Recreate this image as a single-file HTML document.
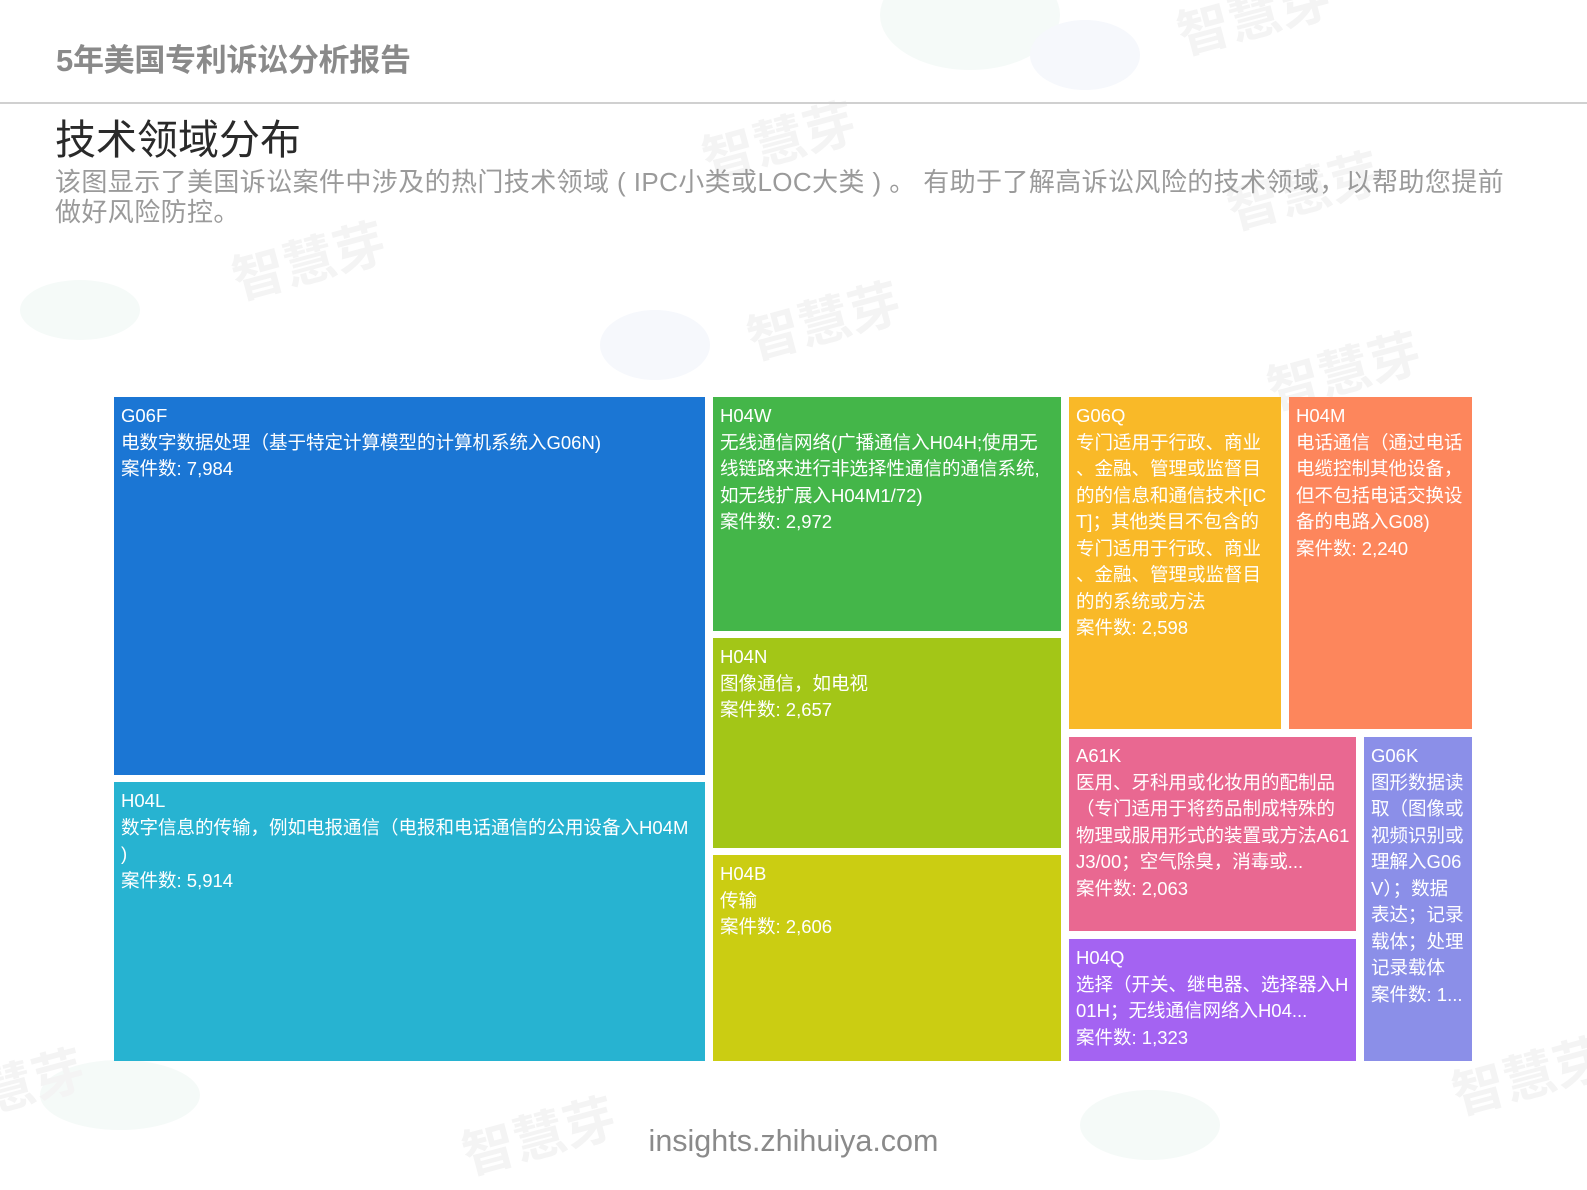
<!DOCTYPE html>
<html><head><meta charset="utf-8"><style>
*{margin:0;padding:0;box-sizing:border-box}
body{width:1587px;height:1190px;background:#fff;position:relative;overflow:hidden;font-family:"Liberation Sans","Noto Sans CJK SC",sans-serif}
.wm{position:absolute;color:#f4f4f4;font-size:52px;font-weight:bold;transform:rotate(-15deg);white-space:nowrap}
.blob{position:absolute;border-radius:50%;background:#f5faf8}
.h1{position:absolute;left:56px;top:35px;font-size:31px;font-weight:bold;color:#8a8a8a;letter-spacing:-0.3px}
.line{position:absolute;left:0;top:102px;width:1587px;height:2px;background:#d0d0d0}
.t{position:absolute;left:55px;top:106px;font-size:41px;color:#2a2a2a}
.d{position:absolute;left:55px;top:167px;width:1530px;font-size:26px;line-height:30px;color:#9a9a9a;letter-spacing:0.4px}
.b{position:absolute;color:#fff;font-size:18.5px;line-height:26.5px;padding:6px 7px;overflow:hidden;white-space:nowrap}
.f{position:absolute;left:0;width:1587px;text-align:center;top:1124px;font-size:30.5px;color:#8a8a8a}
</style></head><body>
<div class="blob" style="left:880px;top:-40px;width:180px;height:110px"></div>
<div class="blob" style="left:1030px;top:20px;width:110px;height:70px;background:#f6f8fc"></div>
<div class="blob" style="left:20px;top:280px;width:120px;height:60px"></div>
<div class="blob" style="left:600px;top:310px;width:110px;height:70px;background:#f6f8fc"></div>
<div class="blob" style="left:40px;top:1060px;width:160px;height:70px"></div>
<div class="blob" style="left:1080px;top:1090px;width:140px;height:70px"></div>
<div class="wm" style="left:700px;top:100px">智慧芽</div>
<div class="wm" style="left:230px;top:220px">智慧芽</div>
<div class="wm" style="left:745px;top:280px">智慧芽</div>
<div class="wm" style="left:1265px;top:330px">智慧芽</div>
<div class="wm" style="left:1225px;top:150px">智慧芽</div>
<div class="wm" style="left:1175px;top:-25px">智慧芽</div>
<div class="wm" style="left:460px;top:1095px">智慧芽</div>
<div class="wm" style="left:1450px;top:1035px">智慧芽</div>
<div class="wm" style="left:-20px;top:1040px">慧芽</div>
<div class="h1">5年美国专利诉讼分析报告</div>
<div class="line"></div>
<div class="t">技术领域分布</div>
<div class="d">该图显示了美国诉讼案件中涉及的热门技术领域 ( IPC小类或LOC大类 ) 。 有助于了解高诉讼风险的技术领域，以帮助您提前<br>做好风险防控。</div>

<div class="b" style="left:114px;top:397px;width:591px;height:378px;background:#1b76d4">G06F<br>电数字数据处理（基于特定计算模型的计算机系统入G06N)<br>案件数: 7,984</div>
<div class="b" style="left:114px;top:782px;width:591px;height:279px;background:#27b3d1">H04L<br>数字信息的传输，例如电报通信（电报和电话通信的公用设备入H04M<br>)<br>案件数: 5,914</div>
<div class="b" style="left:713px;top:397px;width:348px;height:234px;background:#44b649">H04W<br>无线通信网络(广播通信入H04H;使用无<br>线链路来进行非选择性通信的通信系统,<br>如无线扩展入H04M1/72)<br>案件数: 2,972</div>
<div class="b" style="left:713px;top:638px;width:348px;height:210px;background:#a3c617">H04N<br>图像通信，如电视<br>案件数: 2,657</div>
<div class="b" style="left:713px;top:855px;width:348px;height:206px;background:#cbcd12">H04B<br>传输<br>案件数: 2,606</div>
<div class="b" style="left:1069px;top:397px;width:212px;height:332px;background:#f9b928">G06Q<br>专门适用于行政、商业<br>、金融、管理或监督目<br>的的信息和通信技术[IC<br>T]；其他类目不包含的<br>专门适用于行政、商业<br>、金融、管理或监督目<br>的的系统或方法<br>案件数: 2,598</div>
<div class="b" style="left:1289px;top:397px;width:183px;height:332px;background:#fd865c">H04M<br>电话通信（通过电话<br>电缆控制其他设备，<br>但不包括电话交换设<br>备的电路入G08)<br>案件数: 2,240</div>
<div class="b" style="left:1069px;top:737px;width:287px;height:194px;background:#e96891">A61K<br>医用、牙科用或化妆用的配制品<br>（专门适用于将药品制成特殊的<br>物理或服用形式的装置或方法A61<br>J3/00；空气除臭，消毒或...<br>案件数: 2,063</div>
<div class="b" style="left:1069px;top:939px;width:287px;height:122px;background:#a463f2">H04Q<br>选择（开关、继电器、选择器入H<br>01H；无线通信网络入H04...<br>案件数: 1,323</div>
<div class="b" style="left:1364px;top:737px;width:108px;height:324px;background:#8b8fe8">G06K<br>图形数据读<br>取（图像或<br>视频识别或<br>理解入G06<br>V）；数据<br>表达；记录<br>载体；处理<br>记录载体<br>案件数: 1...</div>

<div class="f">insights.zhihuiya.com</div>
</body></html>
